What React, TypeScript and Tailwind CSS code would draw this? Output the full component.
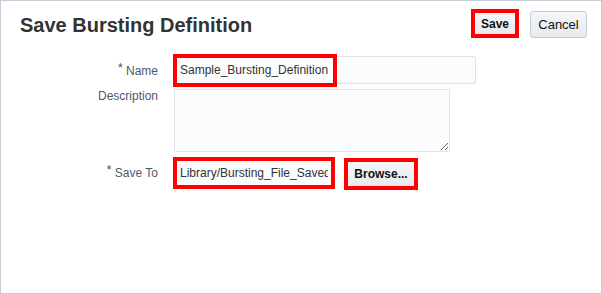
import React from "react";

export default function App() {
  return (
    <div className="w-[602px] h-[294px] border border-[#c5ced6] bg-white font-['Liberation_Sans',Arial,sans-serif] text-[12px]">
      <div className="flex items-start justify-between pl-[19px] pr-[14px] pt-[8px]">
        <h1 className="mt-[4px] text-[20px] leading-[24px] font-bold text-[#333333]">
          Save Bursting Definition
        </h1>
        <div className="flex items-start gap-[11px]">
          <button className="w-[48px] h-[29px] border-4 border-[#ff0000] bg-[linear-gradient(#f5f7f9,#e6eaee)] font-bold text-[12px] leading-[14px] text-[#111]">
            Save
          </button>
          <button className="mt-[2px] w-[57px] h-[27px] rounded-[3px] border border-[#c4cdd5] bg-[linear-gradient(#f5f7f9,#e6eaee)] text-[13px] leading-[15px] text-[#111]">
            Cancel
          </button>
        </div>
      </div>

      <div className="pl-[17px]">
        {/* Name */}
        <div className="mt-[18px] flex items-center">
          <label className="mt-[1px] w-[140px] text-right text-[12px] leading-[16px] text-[#4f5a65]">
            <span className="relative -top-[3px] text-[#3c4856]">*</span> Name
          </label>
          <div className="relative ml-[16px] w-[302px] h-[28px]">
            <input
              readOnly
              value="Sample_Bursting_Definition"
              className="w-full h-full rounded-[2px] border border-[#dde3e8] bg-[#fbfcfd] pl-[5px] text-[12px] text-[#333] outline-none"
            />
            <div className="absolute -left-[1px] -top-[2px] w-[164px] h-[33px] border-4 border-[#ff0000] pointer-events-none" />
          </div>
        </div>

        {/* Description */}
        <div className="mt-[5px] flex items-start">
          <label className="-mt-[1px] w-[140px] text-right text-[12px] leading-[16px] text-[#4f5a65]">
            Description
          </label>
          <textarea
            readOnly
            className="ml-[16px] w-[276px] h-[63px] rounded-[2px] border border-[#dde3e8] bg-[#fbfcfd] outline-none"
          />
        </div>

        {/* Save To */}
        <div className="mt-[5px] flex items-start">
          <label className="mt-[8px] w-[140px] text-right text-[12px] leading-[16px] text-[#4f5a65]">
            <span className="relative -top-[3px] text-[#3c4856]">*</span> Save To
          </label>
          <input
            readOnly
            value="Library/Bursting_File_Saved"
            className="ml-[15px] w-[162px] h-[32px] border-4 border-[#ff0000] bg-[#fbfcfd] pl-[3px] pr-[3px] text-[12px] text-[#333] outline-none"
          />
          <button className="mt-[1px] ml-[9px] w-[74px] h-[32px] border-4 border-[#ff0000] bg-[linear-gradient(#f5f7f9,#e6eaee)] font-bold text-[12px] leading-[14px] text-[#111]">
            Browse...
          </button>
        </div>
      </div>
    </div>
  );
}
